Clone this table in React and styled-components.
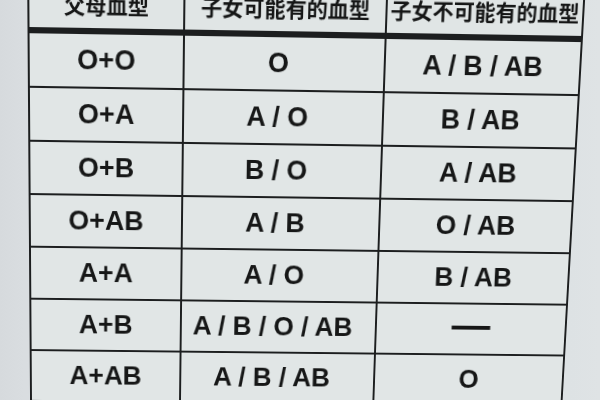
import React from 'react';
import styled, {createGlobalStyle} from 'styled-components';

// photo of a printed card: the table is a bit off-square, so warp it with a homography
const adj = (m) => [
  m[4] * m[8] - m[5] * m[7], m[2] * m[7] - m[1] * m[8], m[1] * m[5] - m[2] * m[4],
  m[5] * m[6] - m[3] * m[8], m[0] * m[8] - m[2] * m[6], m[2] * m[3] - m[0] * m[5],
  m[3] * m[7] - m[4] * m[6], m[1] * m[6] - m[0] * m[7], m[0] * m[4] - m[1] * m[3],
];

const mulMM = (a, b) => {
  const c = [];
  for (let i = 0; i < 3; i++) {
    for (let j = 0; j < 3; j++) {
      let s = 0;
      for (let k = 0; k < 3; k++) s += a[3 * i + k] * b[3 * k + j];
      c[3 * i + j] = s;
    }
  }
  return c;
};

const mulMV = (m, v) => [
  m[0] * v[0] + m[1] * v[1] + m[2] * v[2],
  m[3] * v[0] + m[4] * v[1] + m[5] * v[2],
  m[6] * v[0] + m[7] * v[1] + m[8] * v[2],
];

const basis = (p) => {
  const m = [p[0][0], p[1][0], p[2][0], p[0][1], p[1][1], p[2][1], 1, 1, 1];
  const v = mulMV(adj(m), [p[3][0], p[3][1], 1]);
  return mulMM(m, [v[0], 0, 0, 0, v[1], 0, 0, 0, v[2]]);
};

const warp = (src, dst) => {
  const t = mulMM(basis(dst), adj(basis(src)));
  const n = t.map((x) => x / t[8]);
  return `matrix3d(${[n[0], n[3], 0, n[6], n[1], n[4], 0, n[7], 0, 0, 1, 0, n[2], n[5], 0, n[8]].join(',')})`;
};

// corners: header line left/right, 7th row line left/right
const TABLE_WARP = warp(
  [[0, 50], [554, 50], [0, 421], [554, 421]],
  [[-0.5, 50], [555, 59], [2, 419], [534.5, 424]],
);

const ROWS = [
  ['O+O', 'O', 'A / B / AB'],
  ['O+A', 'A / O', 'B / AB'],
  ['O+B', 'B / O', 'A / AB'],
  ['O+AB', 'A / B', 'O / AB'],
  ['A+A', 'A / O', 'B / AB'],
  ['A+B', 'A / B / O / AB', '—'],
  ['A+AB', 'A / B / AB', 'O'],
  ['', '', ''],
];

const HEADERS = ['父母血型', '子女可能有的血型', '子女不可能有的血型'];

const GlobalStyle = createGlobalStyle`
  html, body {
    margin: 0;
    padding: 0;
    overflow: hidden;
  }
`;

const StyledPage = styled.div`
  display: flow-root;
  width: 600px;
  height: 400px;
  overflow: hidden;
  padding-left: 28px;
  box-sizing: border-box;
  background: linear-gradient(90deg, #d6dadd 0%, #d9dde0 4%, #dde2e4 95%, #dfe3e5 100%);
`;

const StyledTable = styled.div`
  width: 554px;
  margin-top: -22px;
  padding: 2px;
  box-sizing: border-box;
  display: grid;
  grid-template-columns: 152px 199px 195px;
  grid-auto-rows: 51px;
  gap: 2px;
  background: #1c1e1f;
  transform-origin: 0 0;
  transform: ${TABLE_WARP};
  filter: blur(0.35px);
`;

const StyledHeadCell = styled.div`
  height: 47px;
  display: flex;
  align-items: center;
  justify-content: center;
  background: #e0e5e5;
  color: #151616;
  font-family: "Noto Sans CJK SC", "Noto Sans", sans-serif;
  font-weight: 700;
  font-size: 21px;
  white-space: nowrap;
  overflow: hidden;
`;

const StyledCell = styled.div`
  display: flex;
  align-items: center;
  justify-content: center;
  padding-right: ${(props) => props.$shift || 0}px;
  background: #e1e6e6;
  color: #161717;
  font-family: "Liberation Sans", Arial, sans-serif;
  font-weight: 700;
  font-size: 27px;
  white-space: nowrap;
`;

const StyledDash = styled.span`
  font-size: 40px;
  line-height: 1;
  transform: translateY(-5px);
`;

const App = () => (
  <StyledPage>
    <GlobalStyle />
    <StyledTable>
      {HEADERS.map((h) => (
        <StyledHeadCell key={h}>{h}</StyledHeadCell>
      ))}
      {ROWS.map((row, i) => (
        <React.Fragment key={i}>
          <StyledCell>{row[0]}</StyledCell>
          <StyledCell $shift={12}>{row[1]}</StyledCell>
          <StyledCell>
            {row[2] === '—' ? <StyledDash>—</StyledDash> : row[2]}
          </StyledCell>
        </React.Fragment>
      ))}
    </StyledTable>
  </StyledPage>
);

export default App;
